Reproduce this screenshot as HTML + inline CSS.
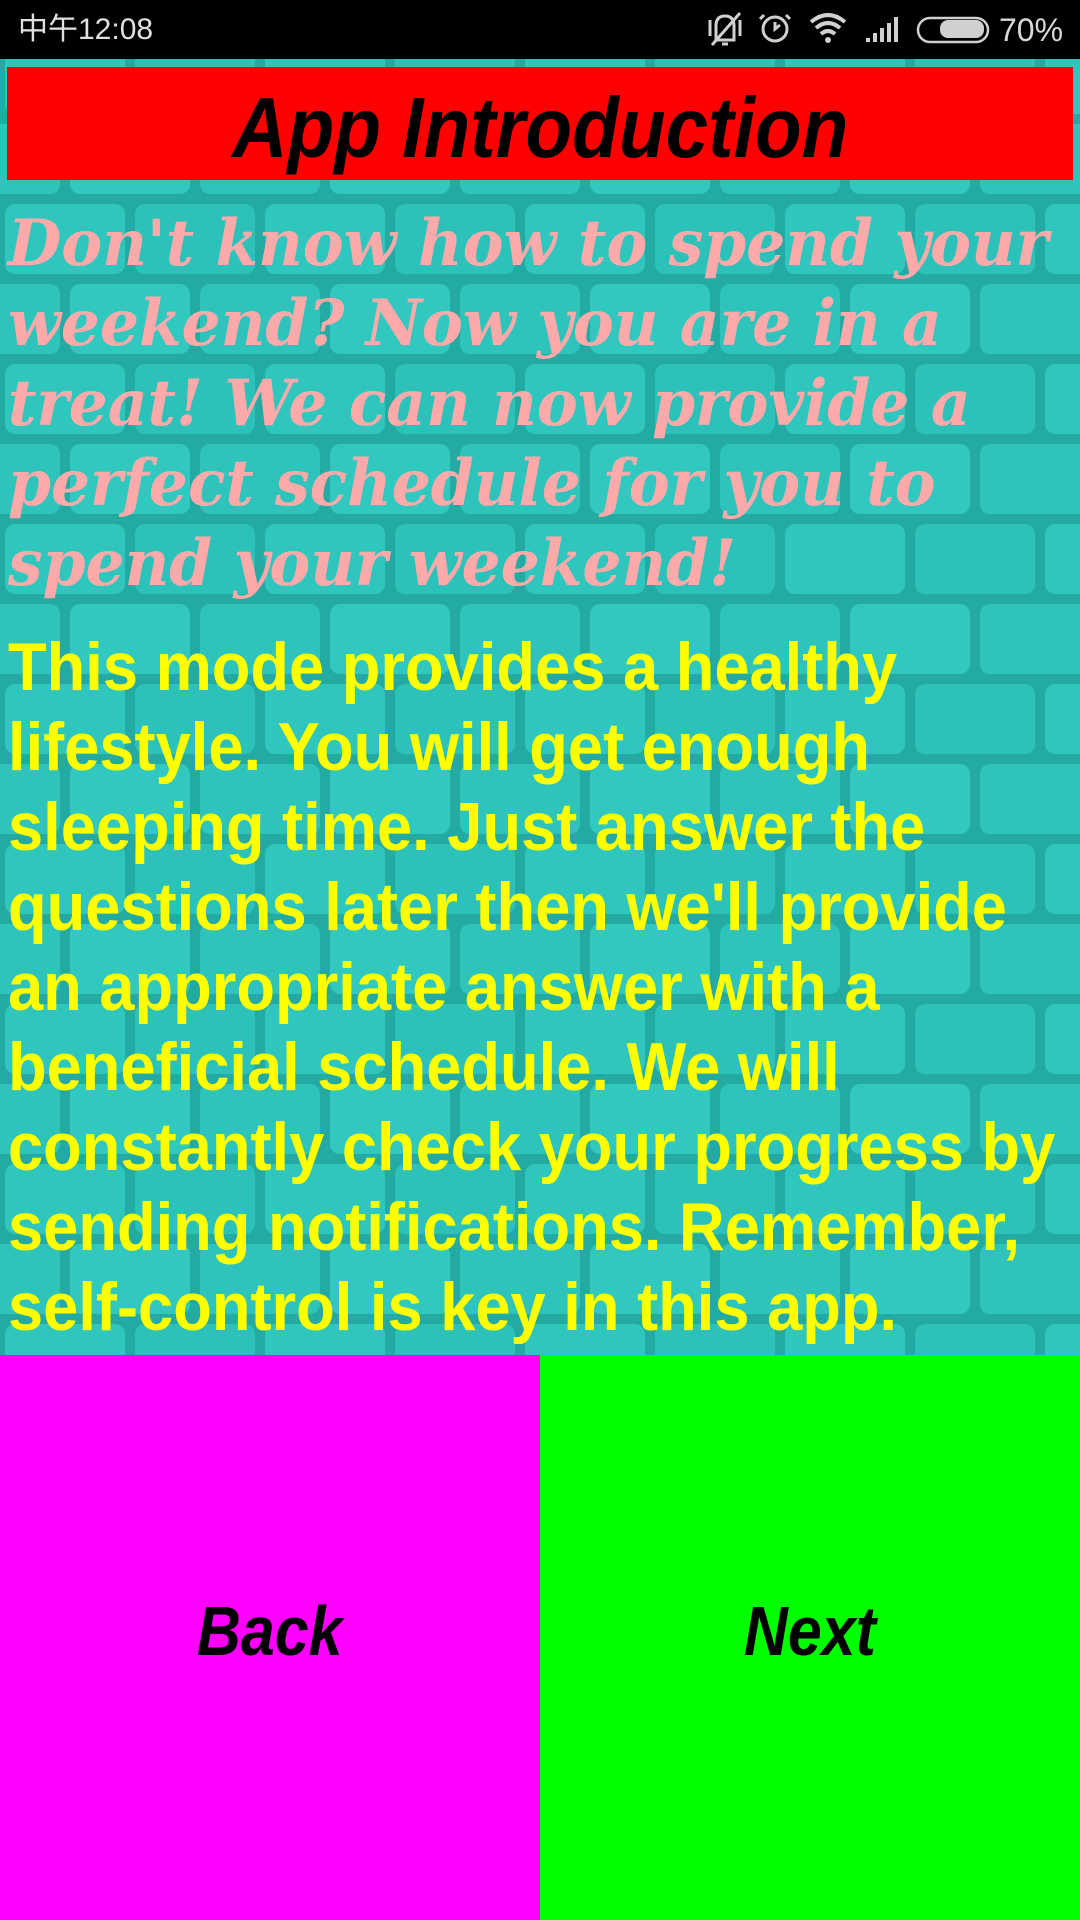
<!DOCTYPE html>
<html><head><meta charset="utf-8"><style>
html,body{margin:0;padding:0;width:1080px;height:1920px;overflow:hidden;position:relative;background:#2cc3bb;}
.sb{position:absolute;left:0;top:0;width:1080px;height:59px;background:#000;color:#d8d8d8;}
.bg{position:absolute;left:0;top:59px;width:1080px;height:1296px;}
.t{position:absolute;white-space:nowrap;}
.title{position:absolute;left:7px;top:67px;width:1066px;height:113px;background:#ff0000;}
.pink div,.yel div{white-space:nowrap;transform-origin:0 0;}
</style></head><body>
<div class="sb">
  <div class="t" style="left:18px;top:10px;font:30px 'Liberation Sans','Noto Sans CJK SC',sans-serif;line-height:40px;color:#e0e0e0;">中午12:08</div>
  <svg style="position:absolute;left:700px;top:8px" width="370" height="44" viewBox="700 8 370 44">
    <g fill="none" stroke="#d0d0d0" stroke-width="3">
      <path d="M716 40 L716 26 Q716 16 725 16 Q734 16 734 26 L734 40 Z"/>
      <path d="M722 44 h6"/>
      <path d="M710 20 v16 M740 20 v16"/>
      <path d="M712 45 L740 13"/>
      <circle cx="775" cy="29" r="12"/>
      <path d="M775 22 v7 l5 -4"/>
      <path d="M764 15 l-4 4 M786 15 l4 4"/>
      <path d="M811 22 Q828 8 845 22" stroke-width="4"/>
      <path d="M816 28 Q828 18 840 28" stroke-width="4"/>
      <path d="M821 34 Q828 28 835 34" stroke-width="4"/>
    </g>
    <circle cx="828" cy="40" r="3" fill="#d0d0d0"/>
    <g fill="#d0d0d0">
      <rect x="866" y="38" width="4" height="4"/><rect x="873" y="33" width="4" height="9"/><rect x="880" y="28" width="4" height="14"/><rect x="887" y="23" width="4" height="19"/><rect x="894" y="17" width="4" height="25"/>
      <rect x="940" y="20" width="44" height="18" rx="8"/>
    </g>
    <rect x="918" y="18" width="70" height="24" rx="12" fill="none" stroke="#d0d0d0" stroke-width="2.5"/>
  </svg>
  <div class="t" style="left:999px;top:10px;font:32px 'Liberation Sans',sans-serif;line-height:40px;color:#d8d8d8;">70%</div>
</div>
<svg class="bg" viewBox="0 0 1080 1296" preserveAspectRatio="none">
  <defs>
    <pattern id="br" width="260" height="160" patternUnits="userSpaceOnUse" x="0" y="-20">
      <rect width="260" height="160" fill="#22aaa3"/>
      <rect x="5" y="5" width="120" height="70" rx="10" fill="#2fc6be"/>
      <rect x="135" y="5" width="120" height="70" rx="10" fill="#2cc2ba"/>
      <rect x="-60" y="85" width="120" height="70" rx="10" fill="#2ec4bc"/>
      <rect x="70" y="85" width="120" height="70" rx="10" fill="#31c8c0"/>
      <rect x="200" y="85" width="120" height="70" rx="10" fill="#2ec4bc"/>
    </pattern>
  </defs>
  <rect width="1080" height="1296" fill="url(#br)"/>
</svg>
<div class="title"></div>
<div class="t" style="left:0;width:1080px;top:86px;text-align:center;font:italic bold 85px/85px 'Liberation Sans',sans-serif;color:#000;"><span style="display:inline-block;transform:scaleX(0.9);">App Introduction</span></div>
<div class="t pink" style="left:8px;top:204px;font:italic bold 64px/80px 'DejaVu Serif',serif;color:#ffaaaa;">
<div style="transform:scaleX(0.96)">Don't know how to spend your</div>
<div style="transform:scaleX(0.96)">weekend? Now you are in a</div>
<div style="transform:scaleX(0.96)">treat! We can now provide a</div>
<div style="transform:scaleX(0.96)">perfect schedule for you to</div>
<div style="transform:scaleX(0.96)">spend your weekend!</div>
</div>
<div class="t yel" style="left:8px;top:627px;font:bold 68px/80px 'Liberation Sans',sans-serif;color:#ffff00;">
<div style="transform:scaleX(0.93)">This mode provides a healthy</div>
<div style="transform:scaleX(0.93)">lifestyle. You will get enough</div>
<div style="transform:scaleX(0.93)">sleeping time. Just answer the</div>
<div style="transform:scaleX(0.93)">questions later then we'll provide</div>
<div style="transform:scaleX(0.93)">an appropriate answer with a</div>
<div style="transform:scaleX(0.93)">beneficial schedule. We will</div>
<div style="transform:scaleX(0.93)">constantly check your progress by</div>
<div style="transform:scaleX(0.93)">sending notifications. Remember,</div>
<div style="transform:scaleX(0.93)">self-control is key in this app.</div>
</div>
<div style="position:absolute;left:0;top:1355px;width:540px;height:565px;background:#ff00ff;"></div>
<div style="position:absolute;left:540px;top:1355px;width:540px;height:565px;background:#00ff00;"></div>
<div class="t" style="left:0;width:540px;top:1596px;text-align:center;font:italic bold 70px/70px 'Liberation Sans',sans-serif;color:#000;"><span style="display:inline-block;transform:scaleX(0.87);">Back</span></div>
<div class="t" style="left:540px;width:540px;top:1596px;text-align:center;font:italic bold 70px/70px 'Liberation Sans',sans-serif;color:#000;"><span style="display:inline-block;transform:scaleX(0.87);">Next</span></div>
</body></html>
